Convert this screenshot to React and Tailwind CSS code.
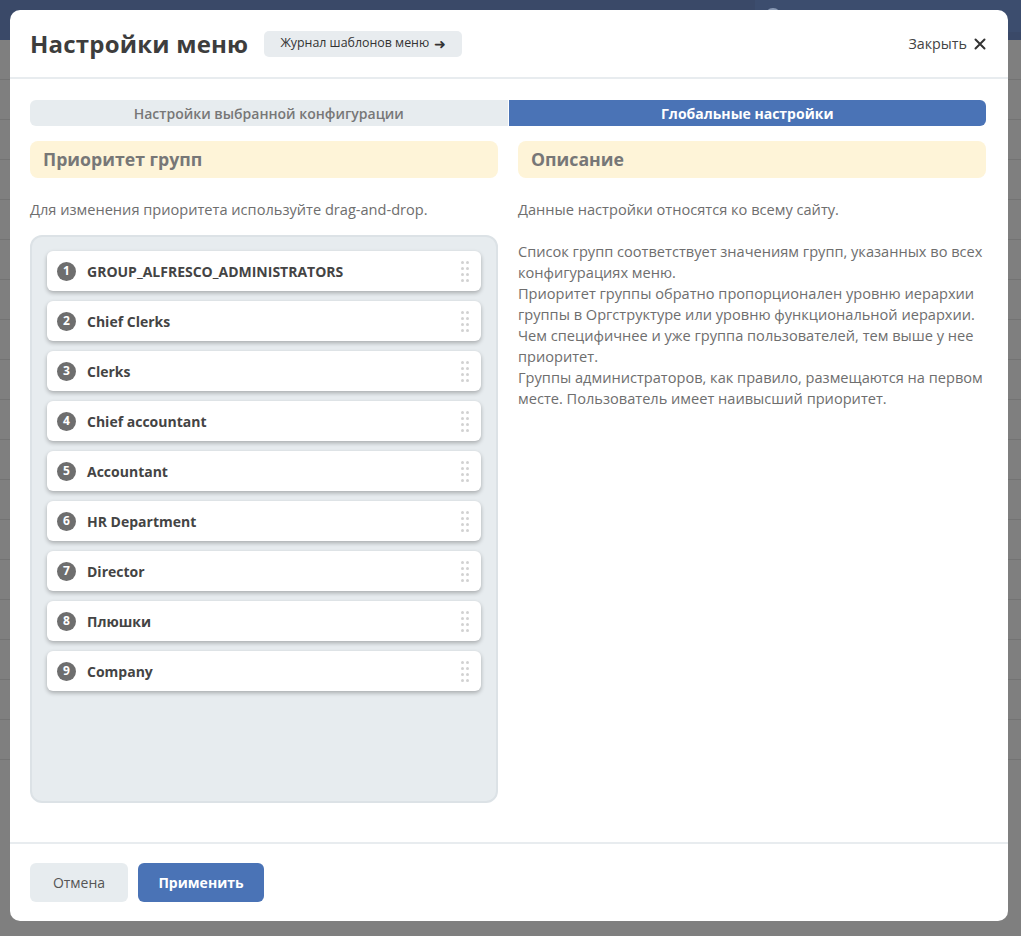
import React from "react";

const groups = [
  "GROUP_ALFRESCO_ADMINISTRATORS",
  "Chief Clerks",
  "Clerks",
  "Chief accountant",
  "Accountant",
  "HR Department",
  "Director",
  "Плюшки",
  "Company",
];

function Handle() {
  return (
    <div className="grid grid-cols-2 gap-x-[2px] gap-y-[3px]">
      {Array.from({ length: 8 }).map((_, i) => (
        <span key={i} className="block w-[3px] h-[3px] rounded-full bg-[#d2d2d2]" />
      ))}
    </div>
  );
}

export default function App() {
  return (
    <div
      className="relative w-[1021px] h-[936px] overflow-hidden bg-[#7f7f7f]"
      style={{ fontFamily: '"Open Sans", "Noto Sans", sans-serif' }}
    >
      {/* dimmed page behind */}
      <div className="h-[32px] bg-[#3a4968] flex justify-end">
        <div className="w-[266px] h-[32px] bg-[#3c4d6e] flex items-center pl-[10px] gap-[12px] text-[#8a9ab5] text-[14px]">
          <span className="w-[16px] h-[16px] rounded-full border-2 border-[#8a9ab5]" />
          <span className="whitespace-nowrap">Найти файл, человека или раз</span>
        </div>
      </div>
      <div className="h-[8px] bg-[#3a4968]" />
      <div className="flex flex-col text-[13px] text-[#222]">
        {[0, 1, 2, 3, 4, 5, 6, 7, 8, 9, 10, 11, 12, 13, 14, 15, 16, 17].map((i) => (
          <div key={i} className="h-[40px] border-b border-[#737373]" />
        ))}
      </div>

      {/* modal */}
      <div className="absolute left-[10px] top-[10px] w-[998px] h-[911px] bg-white rounded-[10px] flex flex-col">
        <div className="h-[69px] shrink-0 flex items-center pl-5 pr-[22px] border-b-2 border-[#e8ecef]">
          <h1 className="text-[24px] font-bold text-[#3d3d3d] tracking-[0.2px]">Настройки меню</h1>
          <button className="ml-4 h-[26px] px-[16px] rounded-[5px] bg-[#e8ecef] text-[12.4px] text-[#333] flex items-center gap-[5px]">
            Журнал шаблонов меню <span className="text-[14px] leading-none">➜</span>
          </button>
          <div className="ml-auto flex items-center gap-[7px] text-[14.3px] text-[#444]">
            Закрыть
            <svg width="12" height="12" viewBox="0 0 12 12" className="mt-[1px]">
              <path d="M1.5 1.5 L10.5 10.5 M10.5 1.5 L1.5 10.5" stroke="#333" strokeWidth="2" strokeLinecap="round" />
            </svg>
          </div>
        </div>

        <div className="flex-1 pl-5 pr-[22px] pt-[21px]">
          <div className="flex h-[26px] text-[14px]">
            <div className="flex-1 bg-[#e7ecef] rounded-l-[6px] flex items-center justify-center text-[#777] font-semibold">
              Настройки выбранной конфигурации
            </div>
            <div className="w-[1px]" />
            <div className="flex-1 bg-[#4a73b6] rounded-r-[6px] flex items-center justify-center text-white font-bold">
              Глобальные настройки
            </div>
          </div>

          <div className="mt-[15px] grid grid-cols-2 gap-5">
            <div>
              <div className="h-[37px] rounded-[8px] bg-[#fef4d8] flex items-center px-[13px] text-[17.7px] font-bold text-[#777]">
                Приоритет групп
              </div>
              <p className="mt-[21px] text-[14.6px] leading-[21px] text-[#6e6e6e]">
                Для изменения приоритета используйте drag-and-drop.
              </p>
              <div className="mt-[15px] h-[568px] rounded-[12px] border-2 border-[#dce2e6] bg-[#e7ecef] px-[15px] pt-[14px] flex flex-col gap-[10px]">
                {groups.map((g, i) => (
                  <div
                    key={g}
                    className="h-[40px] shrink-0 bg-white rounded-[6px] shadow-[0_2px_4px_rgba(0,0,0,0.28)] flex items-center pl-[10px] pr-[12px]"
                  >
                    <span className="w-[19px] h-[19px] rounded-full bg-[#6e6e6e] text-white text-[12px] font-bold flex items-center justify-center leading-none">
                      {i + 1}
                    </span>
                    <span className="ml-[11px] text-[14px] font-bold text-[#444]">{g}</span>
                    <span className="ml-auto">
                      <Handle />
                    </span>
                  </div>
                ))}
              </div>
            </div>
            <div>
              <div className="h-[37px] rounded-[8px] bg-[#fef4d8] flex items-center px-[13px] text-[17.7px] font-bold text-[#777]">
                Описание
              </div>
              <div className="mt-[21px] text-[14.6px] leading-[21px] text-[#6e6e6e]">
                <p className="whitespace-nowrap">Данные настройки относятся ко всему сайту.</p>
                <p className="mt-[21px] whitespace-nowrap">
                  Список групп соответствует значениям групп, указанных во всех
                  <br />
                  конфигурациях меню.
                  <br />
                  Приоритет группы обратно пропорционален уровню иерархии
                  <br />
                  группы в Оргструктуре или уровню функциональной иерархии.
                  <br />
                  Чем специфичнее и уже группа пользователей, тем выше у нее
                  <br />
                  приоритет.
                  <br />
                  Группы администраторов, как правило, размещаются на первом
                  <br />
                  месте. Пользователь имеет наивысший приоритет.
                </p>
              </div>
            </div>
          </div>
        </div>

        <div className="h-[79px] shrink-0 border-t-2 border-[#e8ecef] flex items-start pt-[19px] pl-5 gap-[10px]">
          <button className="h-[39px] w-[98px] rounded-[6px] bg-[#e7ecef] text-[14px] text-[#555]">Отмена</button>
          <button className="h-[39px] w-[126px] rounded-[6px] bg-[#4a73b6] text-[14px] font-bold text-white">Применить</button>
        </div>
      </div>
    </div>
  );
}
